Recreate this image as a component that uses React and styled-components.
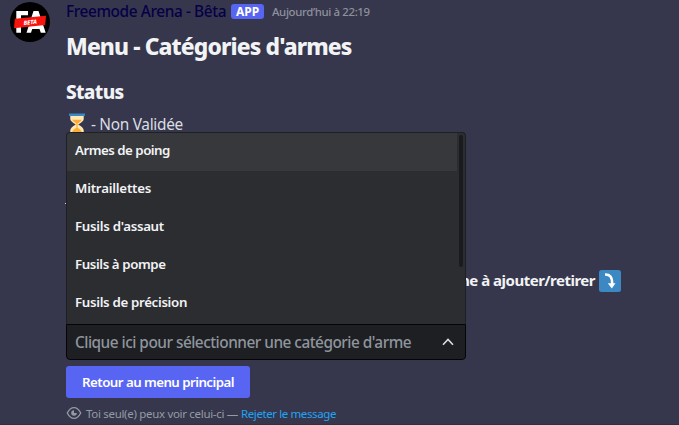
import React from "react";
import styled, { createGlobalStyle } from "styled-components";

const Global = createGlobalStyle`
  * { box-sizing: border-box; }
  body {
    margin: 0;
    background: #36374c;
    font-family: "Noto Sans", sans-serif;
    overflow: hidden;
  }
  h1, h2, p { margin: 0; }
`;

const Message = styled.article`
  display: flex;
  gap: 16px;
  height: 425px;
  padding-left: 10px;
  overflow: hidden;
  border-bottom: 1px solid #30313f;
`;

const Avatar = styled.svg`
  flex: none;
  width: 40px;
  height: 40px;
  margin-top: 2px;
`;

const Body = styled.div`
  display: flex;
  flex-direction: column;
  flex: 1;
  min-width: 0;
`;

const Header = styled.header`
  display: flex;
  align-items: center;
  height: 22px;
  white-space: nowrap;
`;

const Author = styled.span`
  width: 161px;
  font-size: 15.4px;
  font-weight: 500;
  letter-spacing: -0.4px;
  color: #060047;
`;

const AppTag = styled.span`
  width: 33px;
  height: 15px;
  margin-left: 4px;
  border-radius: 3px;
  background: #5865f2;
  color: #fff;
  font-size: 12px;
  font-weight: 700;
  line-height: 15px;
  text-align: center;
`;

const Timestamp = styled.time`
  margin: 1px 0 0 8px;
  font-size: 11.4px;
  font-weight: 500;
  letter-spacing: -0.36px;
  color: #8e919c;
`;

const Title = styled.h1`
  margin-top: 10px;
  font-size: 22.8px;
  font-weight: 800;
  line-height: 30px;
  letter-spacing: -0.87px;
  color: #f2f3f5;
`;

const Subtitle = styled.h2`
  margin-top: 17px;
  font-size: 19px;
  font-weight: 800;
  line-height: 26px;
  letter-spacing: -0.65px;
  color: #f2f3f5;
`;

const StatusLine = styled.p`
  display: flex;
  align-items: center;
  gap: 3px;
  height: 22px;
  margin-top: 8px;
  font-size: 15.4px;
  letter-spacing: -0.3px;
  color: #dbdee1;
`;

const Hourglass = styled.svg`
  width: 22px;
  height: 22px;
`;

const Prompt = styled.p`
  display: flex;
  justify-content: flex-end;
  align-items: center;
  gap: 4px;
  width: 555px;
  height: 22px;
  margin-top: 135px;
  font-size: 15px;
  font-weight: 700;
  line-height: 20px;
  letter-spacing: -0.5px;
  color: #f2f3f5;
`;

const PromptText = styled.span`
  margin-top: -2px;
`;

const ArrowEmoji = styled.svg`
  width: 22px;
  height: 22px;
`;

const Select = styled.div`
  position: relative;
  width: 400px;
  margin-top: 32px;
`;

const Speck = styled.i`
  position: absolute;
  left: -1px;
  top: -121px;
  width: 1px;
  height: 1px;
  background: #dbdee1;
`;

const SelectField = styled.div`
  display: flex;
  align-items: center;
  justify-content: space-between;
  height: 36px;
  padding: 0 9px 0 8px;
  border: 1px solid #050506;
  border-radius: 0 0 4px 4px;
  background: #1e1f22;
  font-size: 15.4px;
  font-weight: 500;
  letter-spacing: -0.51px;
  color: #8f959e;
  white-space: nowrap;
`;

const Chevron = styled.svg`
  width: 16px;
  height: 16px;
`;

const Popout = styled.div`
  position: absolute;
  left: 0;
  bottom: 100%;
  display: flex;
  width: 400px;
  height: 192px;
  border: 1px solid #1f2023;
  border-bottom: 0;
  border-radius: 4px 4px 0 0;
  background: #2c2d31;
  overflow: hidden;
`;

const Options = styled.ul`
  flex: 1;
  margin: 0;
  padding: 0;
  list-style: none;
`;

const Option = styled.li`
  height: 38px;
  padding-left: 8px;
  background: ${(p) => (p.$active ? "#37383c" : "transparent")};
  font-size: 13.3px;
  font-weight: 650;
  line-height: 35px;
  letter-spacing: ${(p) => p.$tracking}px;
  color: #f2f3f5;
`;

const Scrollbar = styled.div`
  width: 8px;
  padding: 2px 2px 0;
`;

const Thumb = styled.div`
  height: 132px;
  border-radius: 2px;
  background: #1a1b1e;
`;

const Button = styled.button`
  width: 184px;
  height: 32px;
  margin-top: 6px;
  padding: 0;
  border: 0;
  border-radius: 3px;
  background: #5865f2;
  color: #fff;
  font: 600 13.3px "Noto Sans", sans-serif;
  letter-spacing: -0.55px;
`;

const Footer = styled.footer`
  display: flex;
  align-items: center;
  height: 16px;
  margin-top: 7px;
  font-size: 11.5px;
  font-weight: 450;
  letter-spacing: -0.31px;
  color: #949ba4;
  white-space: nowrap;
`;

const Eye = styled.svg`
  width: 16px;
  height: 16px;
  margin-right: 4px;
`;

const Dismiss = styled.a`
  margin-left: 3px;
  letter-spacing: -0.4px;
  color: #22a3f5;
`;

const categories = [
  { label: "Armes de poing", tracking: -0.5 },
  { label: "Mitraillettes", tracking: -0.22 },
  { label: "Fusils d'assaut", tracking: -0.3 },
  { label: "Fusils à pompe", tracking: -0.41 },
  { label: "Fusils de précision", tracking: -0.33 },
];

export default function App() {
  return (
    <>
      <Global />
      <Message>
        <Avatar viewBox="0 0 40 40">
          <circle cx="20" cy="20" r="20" fill="#000" />
          <path d="M6.3 9H18V13.2H11V18H17V22H11V30.7H6.3Z" fill="#fff" />
          <path d="M16.5 30.7L23.5 9H28.5L35.7 30.7H30.8L29.5 27H22.2L21 30.7ZM23.5 23H28.3L26 15Z" fill="#fff" fillRule="evenodd" />
          <path d="M4.8 16.8L36 13.8L35.2 23L4 26.2Z" fill="#f5150e" />
          <text x="20.2" y="22.4" textAnchor="middle" transform="rotate(-5 20 20)" fill="#fff" fontSize="5.8" fontWeight="800" fontStyle="italic" fontFamily="Noto Sans, sans-serif">BETA</text>
        </Avatar>
        <Body>
          <Header>
            <Author>Freemode Arena - Bêta</Author>
            <AppTag>APP</AppTag>
            <Timestamp>Aujourd’hui à 22:19</Timestamp>
          </Header>
          <Title>Menu - Catégories d'armes</Title>
          <Subtitle>Status</Subtitle>
          <StatusLine>
            <Hourglass viewBox="0 0 36 36">
              <path d="M7 3H29V10Q29 14 20 19Q29 24 29 29V34H7V29Q7 24 16 19Q7 14 7 10Z" fill="#ffe8b6" />
              <path d="M10 11H26Q25 14 19 17V24Q26 28 27 34H9Q10 28 17 24V17Q11 14 10 11Z" fill="#ffac33" />
              <path d="M5 1H31V5H5ZM5 32H31V36H5Z" fill="#3b88c3" />
            </Hourglass>
            - Non Validée
          </StatusLine>
          <Prompt>
            <PromptText>me à ajouter/retirer</PromptText>
            <ArrowEmoji viewBox="0 0 22 22">
              <rect width="22" height="22" rx="2.5" fill="#3b88c3" />
              <path d="M6 4.6C11 4.4 13.2 7 13.2 14" fill="none" stroke="#fff" strokeWidth="2.5" />
              <path d="M8.8 13.2L12.8 18.5L16.5 13.2Z" fill="#fff" />
            </ArrowEmoji>
          </Prompt>
          <Select>
            <Speck />
            <Popout>
              <Options>
                {categories.map((c, i) => (
                  <Option key={c.label} $active={i === 0} $tracking={c.tracking}>
                    {c.label}
                  </Option>
                ))}
              </Options>
              <Scrollbar>
                <Thumb />
              </Scrollbar>
            </Popout>
            <SelectField>
              Clique ici pour sélectionner une catégorie d'arme
              <Chevron viewBox="0 0 16 16">
                <path d="M3 10.7L8 5.5L13 10.7" fill="none" stroke="#dbdee1" strokeWidth="1.6" />
              </Chevron>
            </SelectField>
          </Select>
          <Button>Retour au menu principal</Button>
          <Footer>
            <Eye viewBox="0 0 16 16">
              <path d="M1.3 8Q4 2.6 8 2.6T14.7 8Q12 13.4 8 13.4T1.3 8Z" fill="none" stroke="#949ba4" strokeWidth="1.3" />
              <path d="M8 5.2A2.8 2.8 0 1 0 10.8 8H8Z" fill="#949ba4" />
            </Eye>
            Toi seul(e) peux voir celui-ci —
            <Dismiss>Rejeter le message</Dismiss>
          </Footer>
        </Body>
      </Message>
    </>
  );
}
